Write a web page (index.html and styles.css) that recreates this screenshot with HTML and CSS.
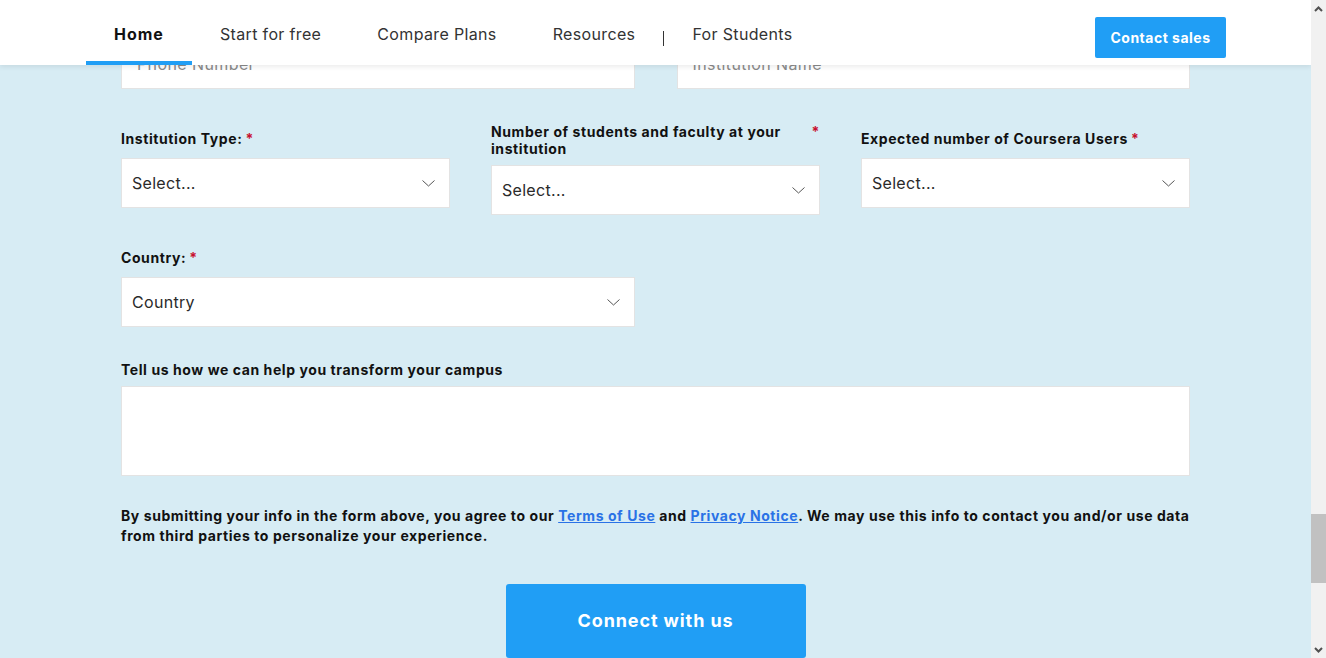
FILE: index.html
```html
<!DOCTYPE html>
<html lang="en">
<head>
<meta charset="utf-8">
<title>Contact – Coursera for Campus</title>
<link rel="stylesheet" href="styles.css">
</head>
<body>
<div class="app">
  <div class="viewport">
    <header class="topbar">
      <nav class="nav">
        <a class="nav-item active" href="#">Home</a>
        <a class="nav-item" href="#">Start for free</a>
        <a class="nav-item" href="#">Compare Plans</a>
        <a class="nav-item" href="#">Resources</a>
        <span class="nav-sep"></span>
        <a class="nav-item" href="#">For Students</a>
      </nav>
      <a class="btn-sales" href="#">Contact sales</a>
    </header>

    <main class="form">
      <div class="row-two">
        <div class="input"><span class="placeholder">Phone Number</span></div>
        <div class="input"><span class="placeholder">Institution Name</span></div>
      </div>

      <div class="row-three">
        <div class="field">
          <label class="label"><span>Institution Type:</span><span class="req">*</span></label>
          <div class="select"><span>Select...</span>
            <svg class="chev" width="13" height="7" viewBox="0 0 13 7"><polyline points="0.5,0.5 6.5,6 12.5,0.5" fill="none" stroke="#555" stroke-width="1"/></svg>
          </div>
        </div>
        <div class="field field-tall">
          <label class="label label-wrap"><span>Number of students and faculty at your institution</span><span class="req">*</span></label>
          <div class="select"><span>Select...</span>
            <svg class="chev" width="13" height="7" viewBox="0 0 13 7"><polyline points="0.5,0.5 6.5,6 12.5,0.5" fill="none" stroke="#555" stroke-width="1"/></svg>
          </div>
        </div>
        <div class="field">
          <label class="label"><span>Expected number of Coursera Users</span><span class="req">*</span></label>
          <div class="select"><span>Select...</span>
            <svg class="chev" width="13" height="7" viewBox="0 0 13 7"><polyline points="0.5,0.5 6.5,6 12.5,0.5" fill="none" stroke="#555" stroke-width="1"/></svg>
          </div>
        </div>
      </div>

      <div class="row-country">
        <div class="field">
          <label class="label"><span>Country:</span><span class="req">*</span></label>
          <div class="select"><span>Country</span>
            <svg class="chev" width="13" height="7" viewBox="0 0 13 7"><polyline points="0.5,0.5 6.5,6 12.5,0.5" fill="none" stroke="#555" stroke-width="1"/></svg>
          </div>
        </div>
      </div>

      <div class="row-message">
        <label class="label label-msg">Tell us how we can help you transform your campus</label>
        <div class="textarea"></div>
      </div>

      <p class="consent">By submitting your info in the form above, you agree to our <a href="#">Terms of Use</a> and <a href="#">Privacy Notice</a>. We may use this info to contact you and/or use data from third parties to personalize your experience.</p>

      <div class="submit-row">
        <a class="btn-connect" href="#">Connect with us</a>
      </div>
    </main>
  </div>

  <div class="scrollbar">
    <div class="sb-btn">
      <svg width="9" height="6" viewBox="0 0 9 6"><polyline points="1,5 4.5,1.5 8,5" fill="none" stroke="#505050" stroke-width="2"/></svg>
    </div>
    <div class="sb-track"><div class="sb-thumb"></div></div>
    <div class="sb-btn">
      <svg width="9" height="6" viewBox="0 0 9 6"><polyline points="1,1 4.5,4.5 8,1" fill="none" stroke="#505050" stroke-width="2"/></svg>
    </div>
  </div>
</div>
</body>
</html>
```

FILE: styles.css
```css
* { box-sizing: border-box; }

html, body {
  margin: 0;
  padding: 0;
  height: 658px;
  overflow: hidden;
}

body {
  font-family: "Inter", "Open Sans", "DejaVu Sans", sans-serif;
  color: #111;
  background: #d7ecf4;
}

.app {
  display: flex;
  height: 658px;
}

.viewport {
  flex: 1;
  position: relative;
  overflow: hidden;
  background: #d7ecf4;
}

/* Header */
.topbar {
  position: absolute;
  top: 0;
  left: 0;
  right: 0;
  height: 65px;
  background: #fff;
  box-shadow: 0 2px 5px rgba(0, 0, 0, 0.08);
  display: flex;
  justify-content: space-between;
  align-items: flex-start;
  padding: 0 85px 0 86px;
  z-index: 2;
}

.nav {
  display: flex;
  align-items: flex-start;
  height: 65px;
}

.nav-item {
  display: flex;
  align-items: center;
  height: 65px;
  padding: 6px 28px 0;
  border-bottom: 4px solid transparent;
  font-size: 16px;
  color: #333;
  text-decoration: none;
  letter-spacing: 0.35px;
}

.nav-item.active {
  font-weight: 700;
  color: #111;
  letter-spacing: 1px;
  border-bottom-color: #209ef5;
}

.nav-sep {
  width: 1px;
  height: 15px;
  background: #333;
  margin-top: 31px;
}

.btn-sales {
  margin-top: 17px;
  width: 131px;
  height: 41px;
  background: #209ef5;
  color: #fff;
  border-radius: 2px;
  font-size: 14px;
  font-weight: 700;
  letter-spacing: 0.5px;
  text-decoration: none;
  display: flex;
  align-items: center;
  justify-content: center;
}

/* Form */
.form {
  width: 1069px;
  margin: 0 auto;
  padding-top: 39px;
}

.row-two {
  display: grid;
  grid-template-columns: 1fr 1fr;
  column-gap: 42px;
}

.input {
  height: 50px;
  background: #fff;
  border: 1px solid #e3e3e3;
  display: flex;
  align-items: center;
  padding: 0 15px;
}

.placeholder {
  font-size: 16px;
  color: #8a8a8a;
  letter-spacing: 0.4px;
}

.row-three {
  margin-top: 34px;
  display: grid;
  grid-template-columns: 1fr 1fr 1fr;
  column-gap: 41px;
  align-items: center;
}

.field {
  display: flex;
  flex-direction: column;
}

.label {
  display: flex;
  gap: 3px;
  font-size: 14px;
  line-height: 17px;
  font-weight: 700;
  color: #111;
  margin-bottom: 11px;
  letter-spacing: 0.58px;
}

.label-wrap {
  margin-bottom: 8px;
}

.req {
  color: #c8102e;
  font-weight: 700;
  flex: none;
}

.select {
  height: 50px;
  background: #fff;
  border: 1px solid #e3e3e3;
  display: flex;
  align-items: center;
  justify-content: space-between;
  padding: 0 14px 0 10px;
  font-size: 16px;
  color: #2a2a2a;
  letter-spacing: 0.3px;
}

.chev {
  flex: none;
}

.row-country {
  margin-top: 34px;
  width: 514px;
}

.row-message {
  margin-top: 34px;
}

.label-msg {
  display: block;
  margin-bottom: 8px;
}

.textarea {
  height: 90px;
  background: #fff;
  border: 1px solid #e3e3e3;
}

.consent {
  margin: 30px 0 0;
  font-size: 14px;
  line-height: 20px;
  font-weight: 700;
  color: #111;
  letter-spacing: 0.58px;
}

.consent a {
  color: #2a72e6;
  text-decoration: underline;
}

.submit-row {
  margin-top: 38px;
  display: flex;
  justify-content: center;
}

.btn-connect {
  width: 300px;
  height: 74px;
  background: #209ef5;
  color: #fff;
  border-radius: 3px;
  font-size: 18px;
  font-weight: 700;
  text-decoration: none;
  display: flex;
  align-items: center;
  justify-content: center;
  letter-spacing: 0.9px;
  padding-bottom: 2px;
}

/* Fake scrollbar */
.scrollbar {
  width: 15px;
  background: #f1f1f1;
  display: flex;
  flex-direction: column;
}

.sb-btn {
  height: 17px;
  display: flex;
  align-items: center;
  justify-content: center;
  flex: none;
}

.sb-track {
  flex: 1;
}

.sb-thumb {
  margin-top: 497px;
  height: 69px;
  background: #c1c1c1;
}
```
